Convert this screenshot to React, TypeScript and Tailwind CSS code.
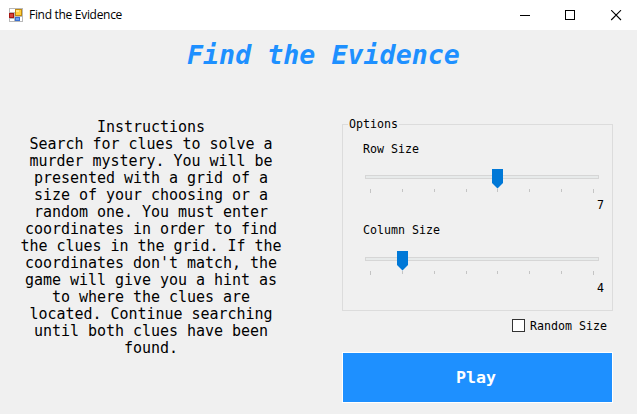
import React from "react";

const mono = "font-['DejaVu_Sans_Mono',monospace]";

const instructions = [
  "Instructions",
  "Search for clues to solve a",
  "murder mystery. You will be",
  "presented with a grid of a",
  "size of your choosing or a",
  "random one. You must enter",
  "coordinates in order to find",
  "the clues in the grid. If the",
  "coordinates don't match, the",
  "game will give you a hint as",
  "to where the clues are",
  "located. Continue searching",
  "until both clues have been",
  "found.",
];

const ticks = [5, 37, 69, 101, 132, 164, 196, 228];

function AppIcon() {
  return (
    <svg width="14" height="14" viewBox="0 0 14 14" shapeRendering="crispEdges" className="shrink-0">
      <rect width="14" height="14" fill="#b9b9b9" />
      <rect x="1" y="1" width="4" height="3" fill="#fff" />
      <rect x="5" y="1" width="1" height="3" fill="#fff" />
      <rect x="1" y="11" width="4" height="2" fill="#fff" />
      <rect x="6" y="9" width="7" height="4" fill="#fff" />
      <rect x="0" y="5" width="5" height="5" fill="#a51512" />
      <rect x="1" y="6" width="3" height="3" fill="#d8453a" />
      <rect x="6" y="1" width="7" height="7" fill="#c08a12" />
      <rect x="7" y="2" width="5" height="5" fill="#ffcf3a" />
      <rect x="7" y="2" width="3" height="2" fill="#ffe58a" />
      <rect x="6" y="9" width="5" height="4" fill="#3a6fd0" />
      <rect x="7" y="10" width="3" height="2" fill="#6fa0f0" />
    </svg>
  );
}

function TitleBar() {
  return (
    <header className="flex h-[30px] items-center bg-white pl-[9px] pr-[15px]">
      <AppIcon />
      <span className="ml-[6px] grow whitespace-pre font-['Open_Sans',sans-serif] text-[12px] leading-[16px] tracking-[-0.3px] text-black">
        Find the Evidence
      </span>
      <svg width="102" height="11" viewBox="0 0 102 11" fill="none" stroke="#000">
        <path d="M0 5.5H10" shapeRendering="crispEdges" />
        <rect x="45.5" y="0.5" width="9" height="9" shapeRendering="crispEdges" />
        <path d="M91.2 0.2L101 10M101 0.2L91.2 10" strokeWidth="1.1" />
      </svg>
    </header>
  );
}

function Slider({ value }: { value: number }) {
  const x = ticks[value - 3];
  return (
    <svg width="234" height="26" viewBox="0 0 234 26" className="block" shapeRendering="crispEdges">
      <rect x="0.5" y="6.5" width="233" height="3" fill="#e7eaea" stroke="#d6d6d6" />
      {ticks.map((t, i) => (
        <rect key={t} x={t} y="20" width="1" height={i === 0 || i === 7 ? 4 : 3} fill="#c4c4c4" />
      ))}
      <path
        d={`M${x - 5} 0h11v14l-5.5 5.5l-5.5 -5.5z`}
        fill="#0078d7"
        shapeRendering="geometricPrecision"
      />
    </svg>
  );
}

export default function App() {
  return (
    <div className={`h-[414px] w-[637px] overflow-hidden bg-[#f0f0f0] text-black ${mono}`}>
      <TitleBar />
      <h1 className="mt-[9px] h-8 whitespace-pre pl-[187px] text-[26.6px] font-bold italic leading-8 tracking-[0.04px] text-[#1e90ff]">
        Find the Evidence
      </h1>
      <main className="flex">
        <section className="mt-12 w-[302px] text-center text-[15px] leading-[17px] tracking-[-0.03px]">
          {instructions.map((line) => (
            <p key={line} className="whitespace-pre">{line}</p>
          ))}
        </section>
        <section className="ml-10 mt-[46px] w-[271px] text-[11.63px] leading-[14px]">
          <fieldset className="h-[194px] border border-[#dcdcdc] pl-[5px]">
            <legend className="px-px">Options</legend>
            <div className="flex w-[256px] flex-col pl-[15px] pt-[11px]">
              <span>Row Size</span>
              <div className="ml-[2px] mt-[13px]">
                <Slider value={7} />
              </div>
              <span className="mt-[3px] self-end">7</span>
              <span className="mt-[11px]">Column Size</span>
              <div className="ml-[2px] mt-[14px]">
                <Slider value={4} />
              </div>
              <span className="mt-1 self-end">4</span>
            </div>
          </fieldset>
          <label className="mt-2 flex h-[13px] items-center justify-end pr-[6px]">
            <span className="mr-[5px] h-[13px] w-[13px] border border-[#333] bg-white" />
            Random Size
          </label>
          <button className="mt-5 block h-[51px] w-full border border-white bg-[#1e90ff] pr-[3px] text-[16.6px] font-bold text-white">
            Play
          </button>
        </section>
      </main>
    </div>
  );
}
